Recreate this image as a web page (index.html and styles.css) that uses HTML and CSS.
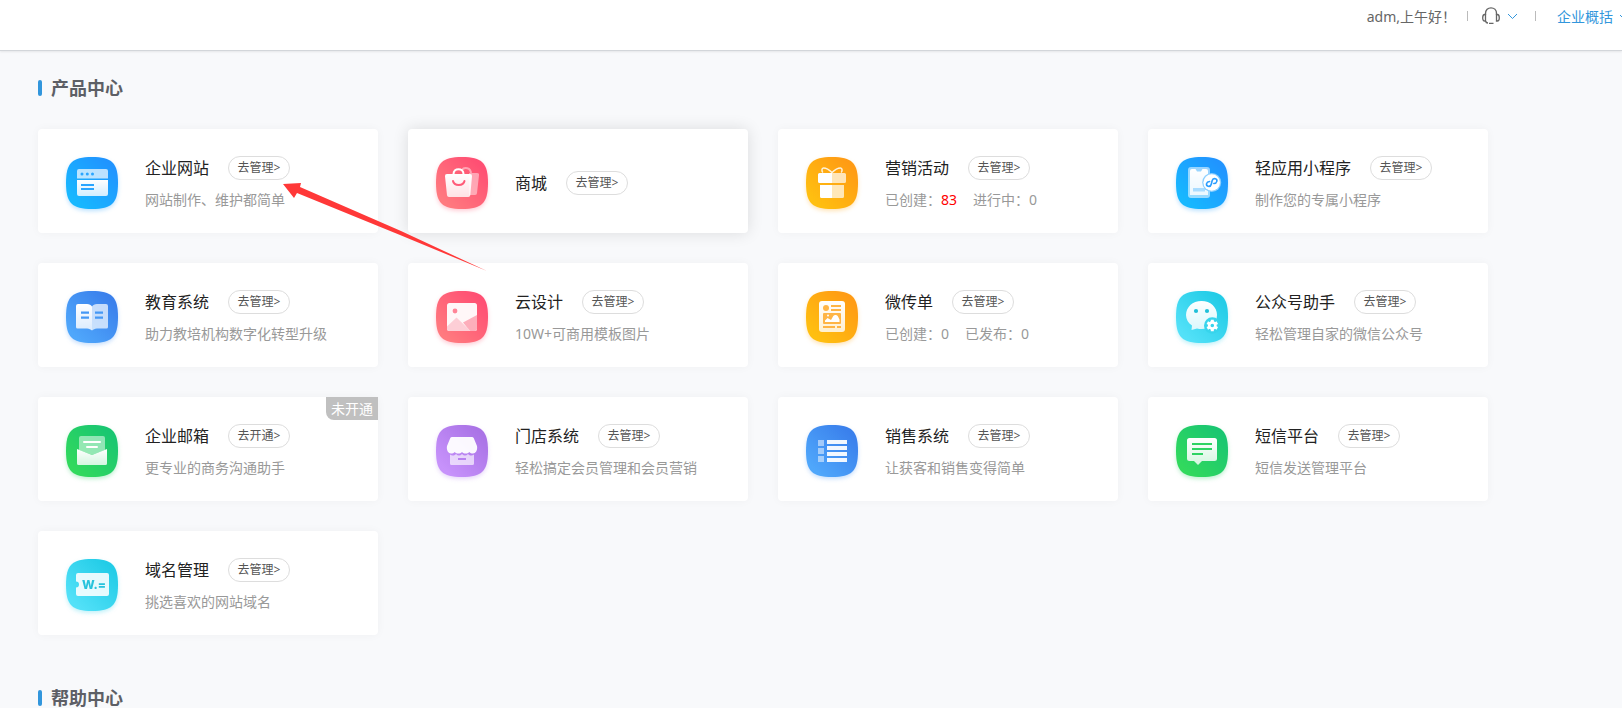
FILE: index.html
```html
<!DOCTYPE html>
<html lang="zh-CN">

<head>
    <meta charset="UTF-8">
    <meta name="viewport" content="width=device-width, initial-scale=1.0">
    <title>产品中心</title>
    <link rel="stylesheet" href="styles.css">
</head>

<body>
    <!-- 图标公用的底形和渐变 -->
    <svg class="defs" width="0" height="0" aria-hidden="true">
        <defs>
            <path id="tile" d="M26 0C46 0 52 6 52 26S46 52 26 52 0 46 0 26 6 0 26 0Z"/>
            <linearGradient id="sky" x1="1" y1="0" x2="0" y2="1"><stop offset=".15" stop-color="#2094ff"/><stop offset=".85" stop-color="#17b8ff"/></linearGradient>
            <linearGradient id="red" x1="1" y1="0" x2="0" y2="1"><stop offset=".15" stop-color="#ff4f73"/><stop offset=".85" stop-color="#ff7a7f"/></linearGradient>
            <linearGradient id="orange" x1="1" y1="0" x2="0" y2="1"><stop offset=".15" stop-color="#ff9b14"/><stop offset=".85" stop-color="#ffbf10"/></linearGradient>
            <linearGradient id="blue" x1="1" y1="0" x2="0" y2="1"><stop offset=".15" stop-color="#3a80ec"/><stop offset=".85" stop-color="#4fa7fb"/></linearGradient>
            <linearGradient id="cyan" x1="1" y1="0" x2="0" y2="1"><stop offset=".15" stop-color="#22cce7"/><stop offset=".85" stop-color="#53e1f8"/></linearGradient>
            <linearGradient id="green" x1="1" y1="0" x2="0" y2="1"><stop offset=".15" stop-color="#19c671"/><stop offset=".85" stop-color="#32d95d"/></linearGradient>
            <linearGradient id="purple" x1="1" y1="0" x2="0" y2="1"><stop offset=".15" stop-color="#aa73e6"/><stop offset=".85" stop-color="#c792fb"/></linearGradient>
            <linearGradient id="white" x1="0" y1="0" x2="0" y2="1"><stop offset="0" stop-color="#fff"/><stop offset="1" stop-color="#fff" stop-opacity=".8"/></linearGradient>
        </defs>
    </svg>

    <header class="header">
        <span class="greeting">adm,上午好！</span>
        <span class="line"></span>
        <button class="service" type="button" aria-label="客服">
            <svg width="18" height="18" viewBox="0 0 18 18" fill="none" stroke="#666" stroke-width="1.300">
                <path d="M3.500 8V6.500C3.500 3 6 .8 9 .8s5.500 2.200 5.500 5.700V8"/>
                <path d="M3.500 7.500v6.500h-.8C1.300 14 .7 12.500.7 11s.6-3.500 2-3.500ZM14.500 7.500v6.500h.8c1.400 0 2-1.500 2-3s-.6-3.500-2-3.500Z"/>
                <path d="M3.500 14c.3 1.500 1.300 2 2.500 2M7 16.300h4.500"/>
            </svg>
            <svg width="11" height="7" viewBox="0 0 11 7" fill="none" stroke="#3296dc"><path d="M1 1l4.500 4.500L10 1"/></svg>
        </button>
        <span class="line"></span>
        <a class="company" href="#">企业概括
            <svg width="11" height="7" viewBox="0 0 11 7" fill="none" stroke="#3296dc"><path d="M1 1l4.500 4.500L10 1"/></svg>
        </a>
    </header>

    <main class="main">
        <section class="section">
            <h2 class="section-title">产品中心</h2>
            <div class="product-list">
                <div class="product">
                    <svg class="icon icon-sky" viewBox="0 0 52 52">
                        <use href="#tile" fill="url(#sky)"/>
                        <path d="M13 12h27a2 2 0 0 1 2 2v7.500H11V14a2 2 0 0 1 2-2Z" fill="#fff" opacity=".7"/>
                        <path d="M11 23h31v14a2 2 0 0 1-2 2H13a2 2 0 0 1-2-2Z" fill="url(#white)"/>
                        <g fill="#2aa5ff"><circle cx="16" cy="17" r="1.500"/><circle cx="21.300" cy="17" r="1.500"/><circle cx="26.500" cy="17" r="1.500"/><path d="M15 27h13v2H15zM15 31h13v2H15z"/></g>
                    </svg>
                    <div class="info">
                        <div class="name"><span>企业网站</span><button class="manage" type="button">去管理&gt;</button></div>
                        <p class="desc">网站制作、维护都简单</p>
                    </div>
                </div>

                <div class="product active">
                    <svg class="icon icon-red" viewBox="0 0 52 52">
                        <use href="#tile" fill="url(#red)"/>
                        <g opacity=".45"><path d="M33 16h8a2 2 0 0 1 2 2.300l-2 17.700a2 2 0 0 1-2 2h-6Z" fill="#fff"/><path d="M26 13c2-3 9-3 9 4" fill="none" stroke="#fff" stroke-width="2"/></g>
                        <path d="M17.500 18v-1c0-6.500 10-6.500 10 0v1" fill="none" stroke="#fff" stroke-width="2"/>
                        <path d="M11 17h23a2 2 0 0 1 2 2.200l-1.700 19a2 2 0 0 1-2 1.800H13a2 2 0 0 1-2-1.800L9 19.200A2 2 0 0 1 11 17Z" fill="url(#white)"/>
                        <path d="M17 24c1 5.200 10.500 5.200 11.500 0" fill="none" stroke="#ff5b78" stroke-width="2" stroke-linecap="round"/>
                    </svg>
                    <div class="info">
                        <div class="name"><span>商城</span><button class="manage" type="button">去管理&gt;</button></div>
                    </div>
                </div>

                <div class="product">
                    <svg class="icon icon-orange" viewBox="0 0 52 52">
                        <use href="#tile" fill="url(#orange)"/>
                        <path d="M26 15.500c-3-3-6-4.500-8.500-4.500-2 0-2 3.500-.5 4.500M26 15.500c3-3 6-4.500 8.500-4.500 2 0 2 3.500.5 4.500" fill="none" stroke="#fff" stroke-width="1.500" opacity=".85"/>
                        <path d="M26 16H13.500a1.500 1.500 0 0 0-1.500 1.500v7a1.500 1.500 0 0 0 1.500 1.500H26ZM26 28H14v11.500a1.500 1.500 0 0 0 1.500 1.500H26Z" fill="#fff"/>
                        <path d="M26 16h12.500a1.500 1.500 0 0 1 1.500 1.500v7a1.500 1.500 0 0 1-1.500 1.500H26ZM26 28h12v11.500a1.500 1.500 0 0 1-1.500 1.500H26Z" fill="#fff" opacity=".7"/>
                    </svg>
                    <div class="info">
                        <div class="name"><span>营销活动</span><button class="manage" type="button">去管理&gt;</button></div>
                        <p class="desc"><span>已创建：<b class="hot">83</b></span><span>进行中：0</span></p>
                    </div>
                </div>

                <div class="product">
                    <svg class="icon icon-sky" viewBox="0 0 52 52">
                        <use href="#tile" fill="url(#sky)"/>
                        <rect x="12" y="10" width="22" height="31" rx="3" fill="#fff" opacity=".55"/>
                        <path d="M14 14a2 2 0 0 1 2-2h3.500l1.500 2.500h4l1.500-2.500H30a2 2 0 0 1 2 2v24H14Z" fill="url(#white)"/>
                        <path d="M17 31h12v3.500H17z" fill="#a9dcff"/>
                        <circle cx="35.700" cy="25.500" r="9.500" fill="#8ccfff"/>
                        <circle cx="35.700" cy="25.500" r="8.300" fill="#fff"/>
                        <path d="M38 26c3.300-1 3-5 .3-5-1.600 0-2.600 1.300-2.600 2.700v3.600c0 1.400-1 2.700-2.600 2.700-2.700 0-3-4 .3-5" fill="none" stroke="#2a9dff" stroke-width="1.600" stroke-linecap="round" transform="rotate(14 35.700 25.500)"/>
                    </svg>
                    <div class="info">
                        <div class="name"><span>轻应用小程序</span><button class="manage" type="button">去管理&gt;</button></div>
                        <p class="desc">制作您的专属小程序</p>
                    </div>
                </div>

                <div class="product">
                    <svg class="icon icon-blue" viewBox="0 0 52 52">
                        <use href="#tile" fill="url(#blue)"/>
                        <path d="M12 13h9c2.500 0 4 1 5 2.500v24c-1.500-1-2.500-2-5-2h-9.500A1.500 1.500 0 0 1 10 36V15a2 2 0 0 1 2-2Z" fill="url(#white)"/>
                        <path d="M40 13h-9c-2.500 0-4 1-5 2.500v24c1.500-1 2.500-2 5-2h9.500A1.500 1.500 0 0 0 42 36V15a2 2 0 0 0-2-2Z" fill="#fff" opacity=".7"/>
                        <path d="M15 20.500h8v2.200h-8zM15 25.500h8v2.200h-8zM29 20.500h8v2.200h-8zM29 25.500h8v2.200h-8z" fill="#4598f5"/>
                    </svg>
                    <div class="info">
                        <div class="name"><span>教育系统</span><button class="manage" type="button">去管理&gt;</button></div>
                        <p class="desc">助力教培机构数字化转型升级</p>
                    </div>
                </div>

                <div class="product">
                    <svg class="icon icon-red" viewBox="0 0 52 52">
                        <use href="#tile" fill="url(#red)"/>
                        <rect x="11" y="12" width="30" height="28" rx="2.500" fill="#fff" opacity=".95"/>
                        <path d="M27 31.500L41 24v13.500a2.500 2.500 0 0 1-2.500 2.500H34Z" fill="#fdaebb"/>
                        <path d="M11 35.500l9.500-9L34.500 40h-21a2.500 2.500 0 0 1-2.500-2.500Z" fill="#fdced6"/>
                        <circle cx="19" cy="20" r="2.400" fill="#ff8597"/>
                    </svg>
                    <div class="info">
                        <div class="name"><span>云设计</span><button class="manage" type="button">去管理&gt;</button></div>
                        <p class="desc">10W+可商用模板图片</p>
                    </div>
                </div>

                <div class="product">
                    <svg class="icon icon-orange" viewBox="0 0 52 52">
                        <use href="#tile" fill="url(#orange)"/>
                        <rect x="13" y="10" width="26" height="31" rx="3" fill="url(#white)"/>
                        <g fill="#ffb545"><circle cx="20" cy="17" r="3"/><path d="M25 14h10v2H25zM25 18h10v2H25zM17 35h12v2H17zM31 35h4v2h-4z"/><rect x="17" y="22" width="18" height="11" rx="1"/></g>
                        <path d="M19 31v-1.500l2.500-2.500 3.500 2 2-3.500c1-2 4-2 5 0l1.500 3V31Z" fill="#fff"/><circle cx="22" cy="24.500" r="1" fill="#fff"/>
                    </svg>
                    <div class="info">
                        <div class="name"><span>微传单</span><button class="manage" type="button">去管理&gt;</button></div>
                        <p class="desc"><span>已创建：0</span><span>已发布：0</span></p>
                    </div>
                </div>

                <div class="product">
                    <svg class="icon icon-cyan" viewBox="0 0 52 52">
                        <use href="#tile" fill="url(#cyan)"/>
                        <path d="M25.500 10C34.500 10 41 16.200 41 24s-6.500 14-15.500 14c-1.500 0-3-.2-4.500-.6L15.500 39l.5-4.500C12.300 32 10 28.300 10 24c0-7.800 6.500-14 15.500-14Z" fill="url(#white)"/>
                        <g fill="#1fc0d9"><circle cx="20" cy="20" r="2.100"/><circle cx="31" cy="20" r="2.100"/></g>
                        <circle cx="36.300" cy="34.500" r="8.300" fill="#37d4ec"/>
                        <circle cx="36.300" cy="34.500" r="3.100" fill="none" stroke="#fff" stroke-width="2.600"/>
                        <path d="M36.300 28.700v2.500M36.300 37.800v2.500M31.300 31.600l2.100 1.200M39.200 36.200l2.100 1.200M31.300 37.400l2.100-1.200M39.200 32.800l2.100-1.200" stroke="#fff" stroke-width="3"/>
                    </svg>
                    <div class="info">
                        <div class="name"><span>公众号助手</span><button class="manage" type="button">去管理&gt;</button></div>
                        <p class="desc">轻松管理自家的微信公众号</p>
                    </div>
                </div>

                <div class="product">
                    <span class="badge">未开通</span>
                    <svg class="icon icon-green" viewBox="0 0 52 52">
                        <use href="#tile" fill="url(#green)"/>
                        <path d="M15 11h22a2 2 0 0 1 2 2v12l-13 5-13-5V13a2 2 0 0 1 2-2Z" fill="#fff" opacity=".5"/>
                        <path d="M18 17h16M21 22h10" stroke="#fff" stroke-width="2" stroke-linecap="round"/>
                        <path d="M11 24l15 6 15-6v14.500a1.500 1.500 0 0 1-1.500 1.500h-27a1.500 1.500 0 0 1-1.500-1.500Z" fill="url(#white)"/>
                    </svg>
                    <div class="info">
                        <div class="name"><span>企业邮箱</span><button class="manage" type="button">去开通&gt;</button></div>
                        <p class="desc">更专业的商务沟通助手</p>
                    </div>
                </div>

                <div class="product">
                    <svg class="icon icon-purple" viewBox="0 0 52 52">
                        <use href="#tile" fill="url(#purple)"/>
                        <path d="M14 29.500c2 1.500 4 1.500 6-.5 2 2 4 2 6 0 2 2 4 2 6 0 2 2 4 2 6 .5v9a1.500 1.500 0 0 1-1.500 1.500h-21a1.500 1.500 0 0 1-1.500-1.500Z" fill="#fff" opacity=".65"/>
                        <path d="M16 12h20a2 2 0 0 1 1.700 1L41 21c.8 4.500-1.500 7.500-4 7.500-1.500 0-2.700-.5-3.700-1.500-2 2-5.300 2-7.300 0-2 2-5.300 2-7.300 0-1 1-2.200 1.500-3.700 1.500-2.500 0-4.800-3-4-7.500l3.300-8a2 2 0 0 1 1.700-1Z" fill="#fff" opacity=".95"/>
                        <path d="M22 33h8v2h-8z" fill="#b880f0"/>
                    </svg>
                    <div class="info">
                        <div class="name"><span>门店系统</span><button class="manage" type="button">去管理&gt;</button></div>
                        <p class="desc">轻松搞定会员管理和会员营销</p>
                    </div>
                </div>

                <div class="product">
                    <svg class="icon icon-blue" viewBox="0 0 52 52">
                        <use href="#tile" fill="url(#blue)"/>
                        <path d="M12 15h6v6h-6zM12 23h6v6h-6zM12 31h6v6h-6z" fill="#fff" opacity=".5"/>
                        <path d="M21 15h20v4H21zM21 21h20v4H21zM21 27h20v4H21zM21 33h20v4H21z" fill="#fff" opacity=".93"/>
                    </svg>
                    <div class="info">
                        <div class="name"><span>销售系统</span><button class="manage" type="button">去管理&gt;</button></div>
                        <p class="desc">让获客和销售变得简单</p>
                    </div>
                </div>

                <div class="product">
                    <svg class="icon icon-green" viewBox="0 0 52 52">
                        <use href="#tile" fill="url(#green)"/>
                        <path d="M13.500 13h25a2.500 2.500 0 0 1 2.500 2.500v18a2.500 2.500 0 0 1-2.500 2.500H26l-4 4-4-4h-4.500a2.500 2.500 0 0 1-2.500-2.500v-18a2.500 2.500 0 0 1 2.500-2.500Z" fill="url(#white)"/>
                        <path d="M16 18h20v2H16zM16 23h20v2H16zM16 28h11v2H16z" fill="#2ed363"/>
                    </svg>
                    <div class="info">
                        <div class="name"><span>短信平台</span><button class="manage" type="button">去管理&gt;</button></div>
                        <p class="desc">短信发送管理平台</p>
                    </div>
                </div>

                <div class="product">
                    <svg class="icon icon-cyan" viewBox="0 0 52 52">
                        <use href="#tile" fill="url(#cyan)"/>
                        <path d="M12 14h29a2 2 0 0 1 2 2v19a2 2 0 0 1-2 2H12a2 2 0 0 1-2-2v-6.500a3 3 0 0 0 0-6V16a2 2 0 0 1 2-2Z" fill="#fff" opacity=".88"/>
                        <text class="icon-text" x="16" y="30">W.=</text>
                    </svg>
                    <div class="info">
                        <div class="name"><span>域名管理</span><button class="manage" type="button">去管理&gt;</button></div>
                        <p class="desc">挑选喜欢的网站域名</p>
                    </div>
                </div>

                <!-- 指向企业网站的箭头 -->
                <svg class="arrow" width="206" height="90" viewBox="0 0 206 90" aria-hidden="true">
                    <path d="M0 1L18 0l-1 4L118 48 204 88 117 52 14 10l-3 5Z" fill="#ff3838"/>
                </svg>
            </div>
        </section>

        <section class="section">
            <h2 class="section-title">帮助中心</h2>
        </section>
    </main>
</body>

</html>
```
FILE: styles.css
```css
* {
    box-sizing: border-box;
}

body {
    margin: 0;
    background-color: #f8f9fb;
    color: #666;
    font-family: "Noto Sans", "Noto Sans CJK SC", sans-serif;
    font-size: 14px;
    overflow-x: hidden;
}

button {
    font-family: inherit;
    cursor: pointer;
}

.defs {
    position: absolute;
}

/* 顶部 */
.header {
    display: flex;
    justify-content: flex-end;
    align-items: flex-start;
    height: 51px;
    padding-top: 7px;
    overflow: hidden;
    background-color: #fff;
    border-bottom: 1px solid #d3d6da;
    box-shadow: 0 1px 2px rgba(0, 0, 0, 0.08);
    line-height: 20px;
}

.line {
    width: 1px;
    height: 10px;
    margin-top: 4px;
    background-color: #bbb;
}

.greeting {
    margin-right: 11px;
}

.service {
    display: flex;
    align-items: center;
    gap: 7px;
    margin: 0 17px 0 14px;
    padding: 0;
    border: none;
    background: none;
}

.company {
    display: flex;
    align-items: center;
    gap: 6px;
    margin-right: -8px;
    margin-left: 21px;
    color: #3296dc;
    text-decoration: none;
    white-space: nowrap;
}

/* 产品列表 */
.main {
    padding: 25px 0 0 38px;
}

.section {
    margin-bottom: 51px;
}

.section-title {
    display: flex;
    align-items: center;
    gap: 9px;
    margin: 0 0 29px;
    font-size: 18px;
    line-height: 24px;
    color: #5d5f66;
}

.section-title::before {
    content: "";
    width: 4px;
    height: 16px;
    border-radius: 2px;
    background-color: #3296dc;
}

.product-list {
    position: relative;
    display: grid;
    grid-template-columns: repeat(auto-fill, 340px);
    gap: 30px;
}

.product {
    position: relative;
    display: flex;
    align-items: center;
    gap: 27px;
    min-height: 104px;
    padding: 4px 28px 0;
    border-radius: 4px;
    background-color: #fff;
    box-shadow: 0 0 10px rgba(0, 0, 0, 0.04);
}

.product.active {
    box-shadow: 0 0 16px rgba(0, 0, 0, 0.12);
}

.icon {
    flex: none;
    width: 52px;
    height: 52px;
    overflow: visible;
}

.icon-sky {
    filter: drop-shadow(0 2px 2px rgba(32, 160, 255, 0.3));
}

.icon-red {
    filter: drop-shadow(0 2px 2px rgba(255, 90, 120, 0.3));
}

.icon-orange {
    filter: drop-shadow(0 2px 2px rgba(255, 165, 20, 0.3));
}

.icon-blue {
    filter: drop-shadow(0 2px 2px rgba(70, 150, 245, 0.3));
}

.icon-cyan {
    filter: drop-shadow(0 2px 2px rgba(50, 210, 235, 0.3));
}

.icon-green {
    filter: drop-shadow(0 2px 2px rgba(40, 205, 100, 0.3));
}

.icon-purple {
    filter: drop-shadow(0 2px 2px rgba(180, 125, 240, 0.3));
}

.icon-text {
    fill: #27c3dc;
    font-family: Inter, sans-serif;
    font-size: 12px;
    font-weight: 800;
}

.name {
    display: flex;
    align-items: center;
    gap: 19px;
    color: #222;
    font-size: 16px;
    line-height: 24px;
}

.manage {
    min-width: 62px;
    height: 24px;
    padding: 0 8px;
    border: 1px solid #ddd;
    border-radius: 12px;
    background-color: #fff;
    color: #555;
    font-size: 12px;
    line-height: 22px;
}

.manage:hover {
    border-color: #3296dc;
    color: #3296dc;
}

.desc {
    display: flex;
    gap: 16px;
    margin: 10px 0 0;
    color: #999;
    line-height: 20px;
}

.hot {
    color: #f00;
    font-weight: normal;
}

.badge {
    position: absolute;
    top: 0;
    right: 0;
    padding: 0 5px;
    border-bottom-left-radius: 8px;
    background-color: #c0c0c0;
    color: #fff;
    line-height: 23px;
}

.arrow {
    position: absolute;
    top: 54px;
    left: 245px;
    pointer-events: none;
}
```
